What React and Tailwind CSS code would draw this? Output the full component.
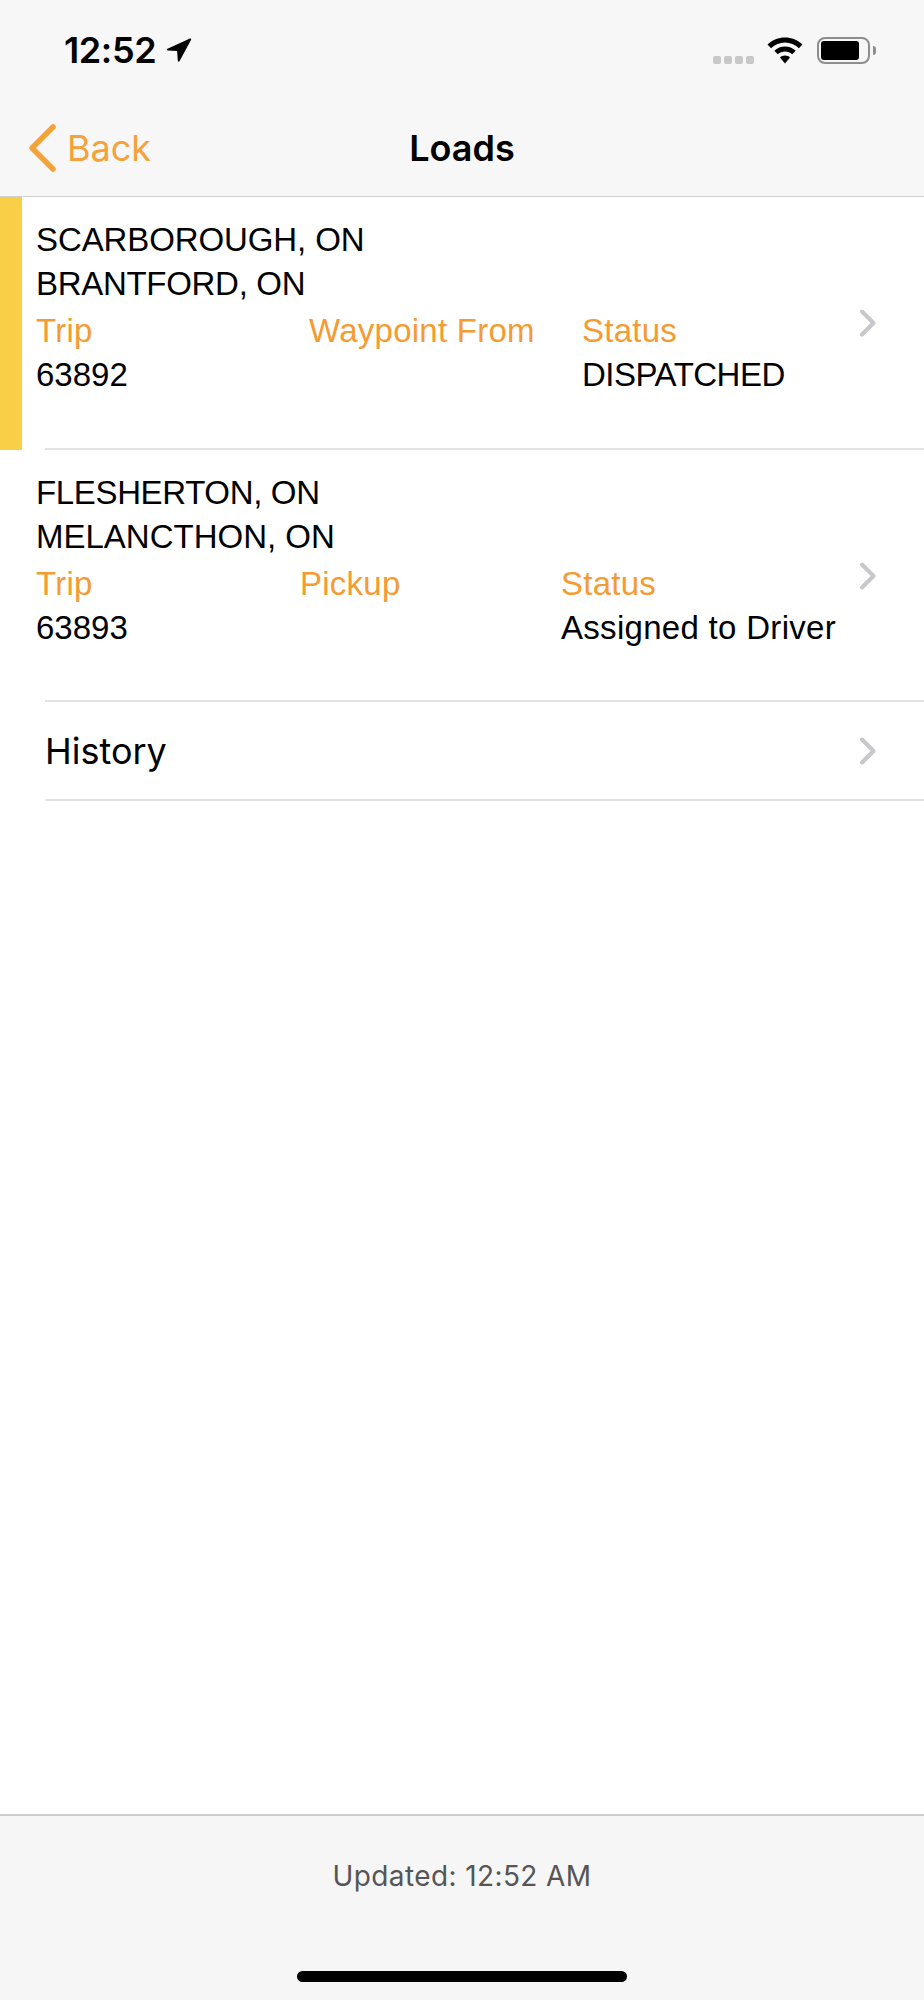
import React from 'react'

const sf = "font-['Inter',sans-serif]"
const helv = "font-['Liberation_Sans',Arial,sans-serif]"

function Chevron() {
    return (
        <svg width="18" height="28" viewBox="0 0 18 28" fill="none" className="shrink-0">
            <path d="M3 2.5L14.5 14L3 25.5" stroke="#c7c7cc" strokeWidth="4" strokeLinecap="round" strokeLinejoin="round" />
        </svg>
    )
}

function StatusBar() {
    return (
        <div className="h-[100px] flex items-start justify-between pl-[64px] pr-[48px]">
            <div className="flex items-center mt-[30px] gap-[10px]">
                <span className={`${sf} text-[36px] leading-[40px] font-semibold text-black tracking-[-0.4px]`}>12:52</span>
                <svg width="26" height="26" viewBox="0 0 26 26" className="-mt-[1px]">
                    <path d="M24 1.500L1.500 11.800c-1 .5-.7 1.600.4 1.700l9.200.6.7 9.600c.1 1.200 1.300 1.400 1.800.4L25 3c.5-1.100-.1-1.900-1-1.500z" fill="#000" />
                </svg>
            </div>
            <div className="flex items-center mt-[37px]">
                <div className="flex gap-[3px] mt-[19px] mr-[13px]">
                    <span className="w-[8px] h-[8px] rounded-[2px] bg-[#c8c8c8]" />
                    <span className="w-[8px] h-[8px] rounded-[2px] bg-[#c8c8c8]" />
                    <span className="w-[8px] h-[8px] rounded-[2px] bg-[#c8c8c8]" />
                    <span className="w-[8px] h-[8px] rounded-[2px] bg-[#c8c8c8]" />
                </div>
                <svg width="36" height="27" viewBox="0 1 36 27" className="mr-[14px]">
                    <path d="M18 1.500C11.500 1.500 5.300 4.100 .5 8.500l3.600 3.700C8 8.600 12.800 6.500 18 6.500s10 2.100 13.900 5.700l3.600-3.700C30.700 4.100 24.500 1.500 18 1.500z" fill="#000" />
                    <path d="M18 10.500c-4 0-7.800 1.500-10.700 4.200l3.500 3.600c2-1.800 4.500-2.800 7.200-2.800s5.200 1 7.200 2.800l3.500-3.600c-2.900-2.700-6.700-4.200-10.700-4.200z" fill="#000" />
                    <path d="M18 19.500c-2 0-3.700.7-5 1.900L18 27.500l5-6.100C21.700 20.200 20 19.500 18 19.500z" fill="#000" />
                </svg>
                <div className="w-[53px] h-[27px] rounded-[8px] border-[2px] border-[#8e8e8e] p-[2px]">
                    <div className="w-[38px] h-full rounded-[3px] bg-black" />
                </div>
                <div className="w-[3px] h-[9px] ml-[3px] rounded-r-[3px] bg-[#8e8e8e]" />
            </div>
        </div>
    )
}

function NavBar() {
    return (
        <div className="relative h-[97px] flex items-center pl-[28px] border-b border-[#cfcfcf]">
            <svg width="28" height="48" viewBox="0 0 28 48" fill="none" className="mr-[11px] mb-[1px]">
                <path d="M25 3L4 24L25 45" stroke="#f4a23b" strokeWidth="5.500" strokeLinecap="round" strokeLinejoin="round" />
            </svg>
            <span className={`${sf} text-[36px] text-[#f4a23b]`}>Back</span>
            <span className={`absolute left-0 right-0 text-center ${sf} text-[36px] font-semibold text-black pointer-events-none`}>Loads</span>
        </div>
    )
}

function LoadRow({ active, from, to, trip, middle, status, tripWidth, midWidth, fromClass, toClass, statusClass }) {
    return (
        <div className="relative h-[252.5px] flex">
            <div className={`w-[22px] shrink-0 ${active ? 'bg-[#f8cf47]' : ''}`} />
            <div className={`flex-1 pl-[14px] pt-[21px] ${helv} text-[33px] leading-[44px] text-black`}>
                <div className={fromClass}>{from}</div>
                <div className={toClass}>{to}</div>
                <div className="flex text-[#f49b32] mt-[3px] tracking-[0.25px]">
                    <div className={tripWidth}>Trip</div>
                    <div className={midWidth}>{middle}</div>
                    <div>Status</div>
                </div>
                <div className="flex">
                    <div className={tripWidth}>{trip}</div>
                    <div className={midWidth} />
                    <div className={statusClass}>{status}</div>
                </div>
            </div>
            <div className="absolute right-[47px] top-[112px]">
                <Chevron />
            </div>
            <div className="absolute left-[45px] right-0 bottom-0 h-[2px] bg-[#e3e3e3]" />
        </div>
    )
}

export default function App() {
    return (
        <div className="w-[924px] h-[2000px] flex flex-col bg-white overflow-hidden">
            <div className="bg-[#f7f7f7]">
                <StatusBar />
                <NavBar />
            </div>
            <LoadRow
                active
                from="SCARBOROUGH, ON"
                to="BRANTFORD, ON"
                trip="63892"
                middle="Waypoint From"
                status="DISPATCHED"
                tripWidth="w-[273px]"
                midWidth="w-[273px]"
                fromClass="tracking-[-0.1px]"
                toClass="tracking-[-0.3px]"
                statusClass="tracking-[-0.5px]"
            />
            <LoadRow
                from="FLESHERTON, ON"
                to="MELANCTHON, ON"
                trip="63893"
                middle="Pickup"
                status="Assigned to Driver"
                tripWidth="w-[264px]"
                midWidth="w-[261px]"
                fromClass="tracking-[-0.35px]"
                statusClass="tracking-[0.3px]"
            />
            <div className="h-[99px] ml-[45px] flex items-center justify-between pr-[47px] border-b-[2px] border-[#e0e0e0]">
                <span className={`${sf} text-[36px] text-black`}>History</span>
                <Chevron />
            </div>
            <div className="flex-1" />
            <div className="h-[186px] bg-[#f6f6f6] border-t-[2px] border-[#cccccc] flex flex-col items-center">
                <div className={`mt-[40px] ${sf} text-[28px] leading-[40px] tracking-[0.4px] text-[#555555]`}>Updated: 12:52 AM</div>
                <div className="mt-[75px] w-[330px] h-[11px] rounded-full bg-black" />
            </div>
        </div>
    )
}
